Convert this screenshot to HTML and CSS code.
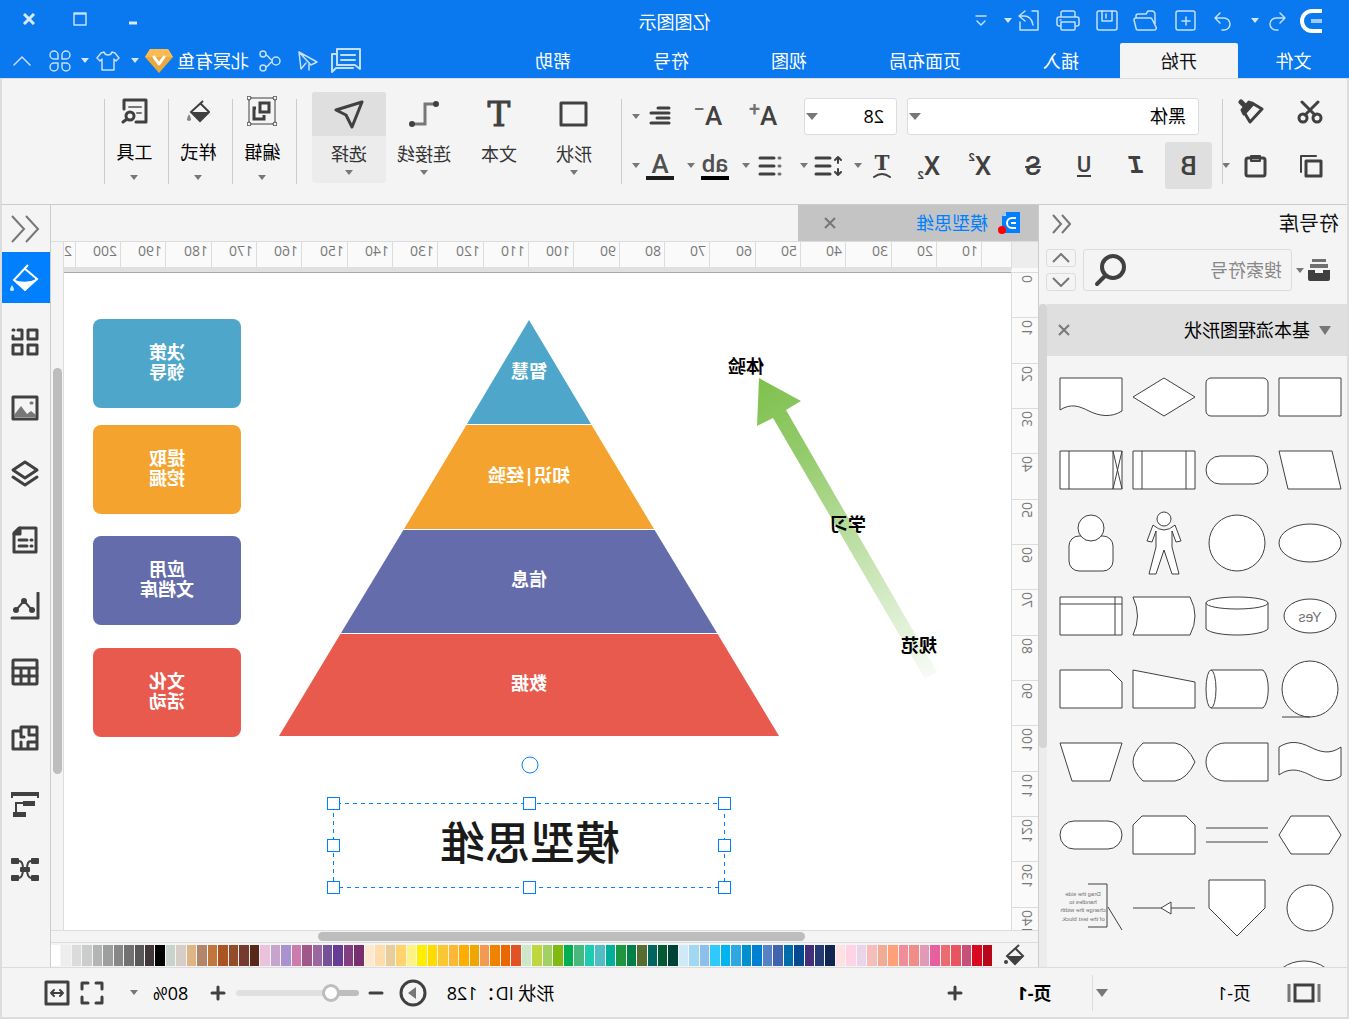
FILE: index.html
```html
<!DOCTYPE html>
<html lang="zh-CN">
<head>
<meta charset="utf-8">
<title>亿图图示</title>
<link rel="stylesheet" href="styles.css">
</head>
<body>
<div class="app">
  <header class="header">
    <div class="titlebar">
      <div class="quick">
        <svg class="logo" width="24" height="26" viewBox="0 0 24 26"><path d="M1 3h10a10 10 0 0 1 0 20H1" fill="none" stroke="#fff" stroke-width="4"/><path d="M1 13h11" stroke="#9ccbff" stroke-width="4"/></svg>
        <button class="hbtn" aria-label="撤销"><svg class="ln" width="18" height="20" viewBox="0 0 18 20"><path d="M6 2 1 7l5 5M1 7h9a6 6 0 0 1 0 12H8"/></svg></button>
        <button class="hbtn" aria-label="撤销列表"><svg class="caret" width="8" height="5" viewBox="0 0 8 5"><path d="M0 0h8L4 5z"/></svg></button>
        <button class="hbtn" aria-label="恢复"><svg class="ln" width="18" height="20" viewBox="0 0 18 20"><path d="m12 2 5 5-5 5M17 7H8a6 6 0 0 0 0 12h2"/></svg></button>
        <button class="hbtn" aria-label="新建"><svg class="ln" width="22" height="22" viewBox="0 0 22 22"><rect x="2" y="1" width="19" height="19" rx="2"/><path d="M11 7v8M7 11h8"/></svg></button>
        <button class="hbtn" aria-label="打开"><svg class="ln" width="24" height="22" viewBox="0 0 24 22"><path d="M2 14V4a3 3 0 0 1 3-3h4l2 3h8a2 2 0 0 1 2 2v2M3 20h16a2 2 0 0 0 2-2l2-8a2 2 0 0 0-2-2H7a2 2 0 0 0-2 1L1 17a2 2 0 0 0 2 3z"/></svg></button>
        <button class="hbtn" aria-label="保存"><svg class="ln" width="22" height="22" viewBox="0 0 22 22"><rect x="1" y="1" width="20" height="19" rx="2"/><path d="M6 1v10h10V1M12 4v4"/></svg></button>
        <button class="hbtn" aria-label="打印"><svg class="ln" width="24" height="22" viewBox="0 0 24 22"><path d="M5 7V3a2 2 0 0 1 2-2h10a2 2 0 0 1 2 2v4M5 16H3a2 2 0 0 1-2-2V9a2 2 0 0 1 2-2h18a2 2 0 0 1 2 2v5a2 2 0 0 1-2 2h-2M5 12h14v7a1 1 0 0 1-1 1H6a1 1 0 0 1-1-1zM19 10h1"/></svg></button>
        <button class="hbtn" aria-label="导出"><svg class="ln" width="22" height="22" viewBox="0 0 22 22"><path d="M8 1H2v19h18v-8M15 1l6 5-6 5M21 6h-5c-5 0-8 3-9 9"/></svg></button>
        <button class="hbtn" aria-label="导出列表"><svg class="caret" width="8" height="5" viewBox="0 0 8 5"><path d="M0 0h8L4 5z"/></svg></button>
        <button class="hbtn" aria-label="更多"><svg class="ln" width="12" height="12" viewBox="0 0 12 12"><path d="M1 1h10M2 6l4 4 4-4"/></svg></button>
      </div>
      <h1 class="app-title">亿图图示</h1>
      <div class="window-controls">
        <button class="hbtn" aria-label="最小化"><svg class="wc" width="10" height="12" viewBox="0 0 10 12"><path d="M1 10h8"/></svg></button>
        <button class="hbtn" aria-label="最大化"><svg class="ln" width="14" height="14" viewBox="0 0 14 14"><path d="M1 1h12v12H1zM1 2h12"/></svg></button>
        <button class="hbtn" aria-label="关闭"><svg class="wc" width="12" height="12" viewBox="0 0 12 12"><path d="m1 1 10 10M11 1 1 11"/></svg></button>
      </div>
    </div>
    <div class="menubar">
      <nav class="tabs">
        <a class="tab tab-file" href="#file">文件</a>
        <a class="tab tab-active" href="#home">开始</a>
        <a class="tab" href="#insert">插入</a>
        <a class="tab" href="#layout">页面布局</a>
        <a class="tab" href="#view">视图</a>
        <a class="tab" href="#symbol">符号</a>
        <a class="tab" href="#help">帮助</a>
      </nav>
      <div class="account">
        <button class="hbtn" aria-label="消息"><svg class="ln2" width="32" height="26" viewBox="0 0 32 26"><path d="M2 1h23v16H7l-5 4zM7 7h14M7 12h14M25 6h5v18l-4-4H9"/></svg></button>
        <button class="hbtn" aria-label="发送"><svg class="ln" width="20" height="22" viewBox="0 0 20 22"><path d="M19 2 1 12l6 3zM19 2l-2 17-5-6M19 2 8 14M9 14v6"/></svg></button>
        <button class="hbtn" aria-label="分享"><svg class="ln" width="22" height="22" viewBox="0 0 22 22"><circle cx="5" cy="11" r="4"/><circle cx="18" cy="4" r="3"/><circle cx="18" cy="18" r="3"/><path d="M9 10c3-1 3-4 6-5M9 12c3 1 3 4 6 5"/></svg></button>
        <span class="user">北冥有鱼</span>
        <svg width="28" height="26" viewBox="0 0 28 26"><path d="M5 1h18l5 8-14 16L0 9z" fill="#eaa83e"/><path d="M5 1h18l5 8H0z" fill="#fabb52"/><path d="m9 9 5 7 5-7" fill="none" stroke="#fff" stroke-width="3" stroke-linecap="round" stroke-linejoin="round"/></svg>
        <svg class="caret" width="8" height="5" viewBox="0 0 8 5"><path d="M0 0h8L4 5z"/></svg>
        <button class="hbtn" aria-label="主题"><svg class="ln" width="24" height="22" viewBox="0 0 24 22"><path d="M8 2 5 3 1 8l3 3 2-2v11h12V9l2 2 3-3-4-5-3-1c-1 4-7 4-8 0z"/></svg></button>
        <svg class="caret" width="8" height="5" viewBox="0 0 8 5"><path d="M0 0h8L4 5z"/></svg>
        <button class="hbtn" aria-label="应用"><svg class="ln" width="22" height="22" viewBox="0 0 22 22"><path d="M9 9H5a4 4 0 1 1 4-4zM13 9V5a4 4 0 1 1 4 4zM9 13v4a4 4 0 1 1-4-4zM13 13h4a4 4 0 1 1-4 4z"/></svg></button>
        <button class="hbtn" aria-label="收起"><svg class="ln" width="18" height="12" viewBox="0 0 18 12"><path d="m1 10 8-8 8 8"/></svg></button>
      </div>
    </div>
  </header>

  <div class="frame">
    <section class="ribbon">
      <div class="clip">
        <div class="clip-top">
          <button class="rbtn" aria-label="剪切"><svg class="ic" width="26" height="24" viewBox="0 0 26 24"><circle cx="6" cy="18" r="4"/><circle cx="20" cy="18" r="4"/><path d="M8 15 21 2M18 15 5 2"/></svg></button>
          <button class="rbtn" aria-label="格式刷"><svg class="ic" width="26" height="26" viewBox="0 0 26 26"><path d="m2 10 10-6 8 9-6 10z"/><path d="m11 5 4-2 7 8-2 4z" fill="#404040"/><path d="m19 7 4-4" stroke-width="5"/></svg></button>
        </div>
        <div class="clip-bottom">
          <button class="rbtn" aria-label="复制"><svg class="ic" width="24" height="24" viewBox="0 0 24 24"><path d="M2 7h15v15H2z"/><path d="M7 2h15v16" stroke-width="2"/></svg></button>
          <button class="rbtn" aria-label="粘贴"><svg class="ic" width="24" height="24" viewBox="0 0 24 24"><rect x="2" y="4" width="19" height="18" rx="2"/><path d="M7 2h9v5H7z" stroke-width="2"/></svg></button>
          <svg class="dn" width="8" height="5" viewBox="0 0 8 5"><path d="M0 0h8L4 5z"/></svg>
        </div>
      </div>
      <div class="vline"></div>
      <div class="fontgroup">
        <div class="font-top">
          <label class="combo"><select aria-label="字体"><option>黑体</option></select><svg class="dn combo-caret" width="12" height="7" viewBox="0 0 12 7"><path d="M0 0h12L6 7z"/></svg></label>
          <label class="combo"><select aria-label="字号"><option>28</option></select><svg class="dn combo-caret" width="12" height="7" viewBox="0 0 12 7"><path d="M0 0h12L6 7z"/></svg></label>
          <button class="rbtn letter" aria-label="增大字号">A<sup class="mark">+</sup></button>
          <button class="rbtn letter" aria-label="减小字号">A<sup class="mark">−</sup></button>
          <button class="split" aria-label="对齐"><svg class="ic" width="28" height="24" viewBox="0 0 28 24"><path d="M5 4h11M5 9h18M5 14h12M5 19h18"/></svg><svg class="dn" width="8" height="5" viewBox="0 0 8 5"><path d="M0 0h8L4 5z"/></svg></button>
        </div>
        <div class="font-bottom">
          <button class="rbtn letter pressed" aria-label="加粗">B</button>
          <button class="rbtn letter ital" aria-label="斜体">I</button>
          <button class="rbtn letter" aria-label="下划线"><span class="under">U</span></button>
          <button class="rbtn letter" aria-label="删除线"><span class="strike">S</span></button>
          <button class="rbtn letter" aria-label="上标">X<sup class="tiny">2</sup></button>
          <button class="rbtn letter" aria-label="下标">X<sub class="tiny">2</sub></button>
          <button class="split" aria-label="文字方向"><span class="arcbox">T<svg class="ic" width="20" height="6" viewBox="0 0 20 6"><path d="M2 5q8-6 16 0" stroke-width="2"/></svg></span><svg class="dn" width="8" height="5" viewBox="0 0 8 5"><path d="M0 0h8L4 5z"/></svg></button>
          <button class="split" aria-label="行距"><svg class="ic" width="28" height="24" viewBox="0 0 28 24"><path d="M12 4h14M12 12h14M12 20h14"/><path d="M4 9V3M1 6l3-3 3 3M4 15v6M1 18l3 3 3-3" stroke-width="2"/></svg><svg class="dn" width="8" height="5" viewBox="0 0 8 5"><path d="M0 0h8L4 5z"/></svg></button>
          <button class="split" aria-label="项目符号"><svg class="ic" width="28" height="24" viewBox="0 0 28 24"><path d="M10 4h14M10 12h14M10 20h14"/><path d="M4 4h1M4 12h1M4 20h1" stroke="#707070"/></svg><svg class="dn" width="8" height="5" viewBox="0 0 8 5"><path d="M0 0h8L4 5z"/></svg></button>
          <button class="split" aria-label="突出显示"><span class="inkbox">ab</span><svg class="dn" width="8" height="5" viewBox="0 0 8 5"><path d="M0 0h8L4 5z"/></svg></button>
          <button class="split" aria-label="字体颜色"><span class="inkbox inkbox-a">A</span><svg class="dn" width="8" height="5" viewBox="0 0 8 5"><path d="M0 0h8L4 5z"/></svg></button>
        </div>
      </div>
      <div class="vline"></div>
      <div class="tools">
        <button class="tool"><span class="tool-icon"><svg class="ic" width="30" height="26" viewBox="0 0 30 26"><path d="M3 2h25v22H3z"/></svg></span>形状<svg class="dn" width="8" height="5" viewBox="0 0 8 5"><path d="M0 0h8L4 5z"/></svg></button>
        <button class="tool"><span class="tool-icon slab">T</span>文本</button>
        <button class="tool"><span class="tool-icon"><svg width="32" height="28" viewBox="0 0 32 28"><path d="M4 4h11v20h11" fill="none" stroke="#777" stroke-width="3"/><circle cx="4" cy="4" r="3" fill="#404040"/><circle cx="28" cy="24" r="3" fill="#404040"/></svg></span>连接线<svg class="dn" width="8" height="5" viewBox="0 0 8 5"><path d="M0 0h8L4 5z"/></svg></button>
        <button class="tool tool-on"><span class="tool-icon"><svg class="ic" width="30" height="30" viewBox="0 0 30 30"><path d="m2 3 26 8-10 5-6 12z"/></svg></span>选择<svg class="dn" width="8" height="5" viewBox="0 0 8 5"><path d="M0 0h8L4 5z"/></svg></button>
      </div>
      <div class="vline"></div>
      <button class="group"><span class="group-icon"><svg width="30" height="30" viewBox="0 0 30 30" fill="none" stroke="#404040"><path d="M2 2h26v26H2z" stroke-width="1"/><path d="M8 7h9v9H8zM21 12h2v11H13v-4" stroke-width="3"/><g fill="#f4f4f4" stroke-width="1"><circle cx="2" cy="2" r="2"/><circle cx="28" cy="2" r="2"/><circle cx="2" cy="28" r="2"/><circle cx="28" cy="28" r="2"/></g></svg></span>编辑<svg class="dn" width="8" height="5" viewBox="0 0 8 5"><path d="M0 0h8L4 5z"/></svg></button>
      <div class="vline"></div>
      <button class="group"><span class="group-icon"><svg width="24" height="26" viewBox="0 0 24 26"><path d="m7 3 12 11-9 9-9-9 8-8" fill="none" stroke="#404040" stroke-width="2"/><path d="M1 14h18l-9 9z" fill="#404040"/><path d="M21 16q-4 7 0 7t0-7z" fill="#888"/></svg></span>样式<svg class="dn" width="8" height="5" viewBox="0 0 8 5"><path d="M0 0h8L4 5z"/></svg></button>
      <div class="vline"></div>
      <button class="group"><span class="group-icon"><svg class="ic" width="28" height="28" viewBox="0 0 28 28"><path d="M12 25H2V3h22v9"/><circle cx="18" cy="19" r="4"/><path d="m21 22 4 3"/><path d="M7 10h12M7 16h4" stroke="#777" stroke-width="2"/></svg></span>工具<svg class="dn" width="8" height="5" viewBox="0 0 8 5"><path d="M0 0h8L4 5z"/></svg></button>
      <div class="vline"></div>
    </section>

    <main class="workspace">
      <aside class="library">
        <div class="lib-head"><h2>符号库</h2><button class="rbtn" aria-label="折叠"><svg class="thin" width="20" height="20" viewBox="0 0 20 20"><path d="M9 1 1 10l8 9M18 1l-8 9 8 9"/></svg></button></div>
        <div class="lib-search">
          <svg width="22" height="22" viewBox="0 0 22 22"><path d="M4 0h14v3H4zM2 5h18v4H2z" fill="#707070"/><path d="M0 11h7v3h8v-3h7v9a2 2 0 0 1-2 2H2a2 2 0 0 1-2-2z" fill="#404040"/></svg>
          <svg class="dn" width="8" height="5" viewBox="0 0 8 5"><path d="M0 0h8L4 5z"/></svg>
          <label class="search"><input type="text" placeholder="搜索符号" aria-label="搜索符号"><svg width="32" height="34" viewBox="0 0 32 34" fill="none" stroke="#404040" stroke-linecap="round"><circle cx="13" cy="14" r="11" stroke-width="4"/><path d="m21 23 8 8" stroke-width="4"/></svg></label>
          <div class="steps">
            <button aria-label="上一个"><svg class="thin" width="18" height="10" viewBox="0 0 18 10"><path d="m1 9 8-8 8 8"/></svg></button>
            <button aria-label="下一个"><svg class="thin" width="18" height="10" viewBox="0 0 18 10"><path d="m1 1 8 8 8-8"/></svg></button>
          </div>
        </div>
        <div class="lib-body">
          <div class="lib-main">
            <div class="category"><svg class="dn" width="12" height="9" viewBox="0 0 12 9"><path d="M0 0h12L6 9z"/></svg><h3>基本流程图形状</h3><button class="rbtn" aria-label="关闭分类"><svg class="thin" width="12" height="12" viewBox="0 0 12 12"><path d="m1 1 10 10M11 1 1 11"/></svg></button></div>
            <div class="shapes">
              <svg viewBox="-36 -36 73 73"><path d="M-31-19h62v38h-62z"/></svg>
              <svg viewBox="-36 -36 73 73"><rect x="-31" y="-19" width="62" height="38" rx="5"/></svg>
              <svg viewBox="-36 -36 73 73"><path d="M0-19 31 0 0 19-31 0z"/></svg>
              <svg viewBox="-36 -36 73 73"><path d="M-31-19h62v32C20 6 12 9 2 14S-20 21-31 14z"/></svg>
              <svg viewBox="-36 -36 73 73"><path d="M31-19h-53l-9 38h53z"/></svg>
              <svg viewBox="-36 -36 73 73"><rect x="-31" y="-14" width="62" height="28" rx="14"/></svg>
              <svg viewBox="-36 -36 73 73"><path d="M-31-19h62v38h-62zM-22-19v38M22-19v38"/></svg>
              <svg viewBox="-36 -36 73 73"><path d="M-31-19h62v38h-62zM-22-19v38M22-19v38M-31-19l9 38M-22-19l-9 38"/></svg>
              <svg viewBox="-36 -36 73 73"><ellipse rx="31" ry="19"/></svg>
              <svg viewBox="-36 -36 73 73"><circle r="28"/></svg>
              <svg viewBox="-36 -36 73 73"><circle cy="-24" r="7"/><path d="M-11-18Q0-8 11-18L17-2l-5 1-4-11V4l7 27H8L0 7l-8 24h-7L-8 4v-16l-4 11-5-1z"/></svg>
              <svg viewBox="-36 -36 73 73"><rect x="-22" y="-7" width="44" height="35" rx="10"/><circle cy="-15" r="13"/></svg>
              <svg viewBox="-36 -36 73 73"><ellipse rx="26" ry="17"/><text y="6" class="yes">Yes</text></svg>
              <svg viewBox="-36 -36 73 73"><path d="M-31-13v26c8 8 54 8 62 0v-26"/><ellipse cy="-13" rx="31" ry="6"/></svg>
              <svg viewBox="-36 -36 73 73"><path d="M31-19h-57q-10 19 0 38h57q-9-19 0-38z"/></svg>
              <svg viewBox="-36 -36 73 73"><path d="M-31-19h62v38h-62zM-31-12h62M-24-19v38"/></svg>
              <svg viewBox="-36 -36 73 73"><circle r="28"/><path d="M0 28h28"/></svg>
              <svg viewBox="-36 -36 73 73"><path d="M26-19h-52c-7 6-7 32 0 38h52"/><ellipse cx="26" rx="5" ry="19"/></svg>
              <svg viewBox="-36 -36 73 73"><path d="M-31-7 31-19v38h-62z"/></svg>
              <svg viewBox="-36 -36 73 73"><path d="M-31-7-19-19h50v38h-62z"/></svg>
              <svg viewBox="-36 -36 73 73"><path d="M-31-15c11 8 21 5 31 0s20-7 31 0v28c-11-8-21-5-31 0s-20 9-31 1z"/></svg>
              <svg viewBox="-36 -36 73 73"><path d="M-31-19h43a19 19 0 0 1 0 38h-43z"/></svg>
              <svg viewBox="-36 -36 73 73"><path d="M21-19q20 19 0 38h-32Q-23 17-31 0q8-17 20-19z"/></svg>
              <svg viewBox="-36 -36 73 73"><path d="M-31-19h62L19 19h-38z"/></svg>
              <svg viewBox="-36 -36 73 73"><path d="M-31 0-19-19h38L31 0 19 19h-38z"/></svg>
              <svg viewBox="-36 -36 73 73"><path d="M-31-7h62M-31 7h62"/></svg>
              <svg viewBox="-36 -36 73 73"><path d="M-31-10l9-9h44l9 9v29h-62z"/></svg>
              <svg viewBox="-36 -36 73 73"><rect x="-31" y="-14" width="62" height="28" rx="14"/></svg>
              <svg viewBox="-36 -36 73 73"><circle r="23"/></svg>
              <svg viewBox="-36 -36 73 73"><path d="M-28-28h56V0L0 28-28 0z"/></svg>
              <svg viewBox="-36 -36 73 73"><path d="M-31 0h24M3 0h28M-7-6 3 0-7 6z"/></svg>
              <svg viewBox="-36 -36 73 73"><path d="M3-24h-19v43H3M-17-1l-14 23" fill="none"/><g class="note"><text x="8" y="-12">Drag the side</text><text x="8" y="-4">handles to</text><text x="8" y="4">change the width</text><text x="8" y="13">of the text block.</text></g></svg>
              <svg viewBox="-36 -36 73 73"><ellipse cx="6" cy="3" rx="30" ry="23"/></svg>
            </div>
          </div>
          <div class="lib-scroll"><div class="lib-thumb"></div></div>
        </div>
      </aside>

      <section class="editor">
        <div class="doctabs">
          <div class="doctab">
            <svg width="22" height="22" viewBox="0 0 22 22"><path d="M0 0h14l4 4v17H0z" fill="#0080ff"/><path d="M14 0v4h4z" fill="#a8d2ff"/><path d="M4 6h4a5 5 0 0 1 0 10H4M4 11h5" fill="none" stroke="#fff" stroke-width="2"/><circle cx="18" cy="18" r="4" fill="#f00"/></svg>
            <a href="#doc">模型思维</a>
            <button class="rbtn" aria-label="关闭文档"><svg class="thin" width="12" height="12" viewBox="0 0 12 12"><path d="m1 1 10 10M11 1 1 11"/></svg></button>
          </div>
        </div>
        <div class="sheet">
          <div class="corner"></div>
          <ol class="hruler" id="hruler"></ol>
          <ol class="vruler" id="vruler"></ol>
          <div class="canvas">
            <svg class="drawing" width="947" height="658" viewBox="0 0 947 658">
              <defs><linearGradient id="fade" gradientUnits="userSpaceOnUse" x1="253" y1="106" x2="80" y2="404"><stop offset="0" stop-color="#7fc04e"/><stop offset=".25" stop-color="#93cb6b"/><stop offset=".55" stop-color="#bcdfa3"/><stop offset="1" stop-color="#f7fbf5"/></linearGradient></defs>
              <path d="m252 106-42 23 15 9L74 400l12 7 152-261 16 8z" fill="url(#fade)"/>
              <path d="m482 48 62 104H420z" fill="#4ea6ca"/>
              <path d="M420 152h124l63 105H357z" fill="#f4a42e"/>
              <path d="M357 257h250l63 104H294z" fill="#646cac"/>
              <path d="M294 361h376l62 103H232z" fill="#e75a4d"/>
              <path d="M400 152.500h160M340 257.500h284M280 361.500h404" stroke="#fff"/>
              <g class="slice"><text x="482" y="106">智慧</text><text x="482" y="210">知识|经验</text><text x="482" y="314">信息</text><text x="482" y="418">数据</text></g>
              <g class="stage"><text x="265" y="101">体验</text><text x="163" y="259">学习</text><text x="92" y="380">规范</text></g>
              <text class="doc-title" x="481" y="588">模型思维</text>
              <g class="selection" fill="#fff" stroke="#0080ff" shape-rendering="crispEdges"><path d="M286.500 531.500h391v84h-391z" fill="none" stroke-dasharray="4 4"/><path d="M280.500 525.500h12v12h-12zM475.500 525.500h12v12h-12zM671.500 525.500h12v12h-12zM280.500 567.500h12v12h-12zM671.500 567.500h12v12h-12zM280.500 609.500h12v12h-12zM475.500 609.500h12v12h-12zM671.500 609.500h12v12h-12z"/></g>
              <circle cx="481" cy="493" r="8" fill="#fff" stroke="#0080ff"/>
            </svg>
            <div class="card card-blue">决策<br>领导</div>
            <div class="card card-orange">提取<br>挖掘</div>
            <div class="card card-purple">应用<br>文档库</div>
            <div class="card card-red">文化<br>活动</div>
          </div>
          <div class="vscroll"><div class="vthumb"></div></div>
          <div class="hscroll"><div class="hthumb"></div></div>
        </div>
        <div class="palette">
          <svg width="24" height="24" viewBox="0 0 24 24"><path d="m8 2 12 11-8 8-8-8 7-7" fill="none" stroke="#404040" stroke-width="2"/><path d="M4 13h16l-8 8z" fill="#404040"/><circle cx="21" cy="19" r="2" fill="#404040"/></svg>
          <div class="swatches" id="swatches"></div>
        </div>
      </section>

      <nav class="rail">
        <button class="rail-btn rail-fold" aria-label="折叠"><svg class="thin" width="30" height="28" viewBox="0 0 30 28"><path d="M14 1 2 14l12 13M28 1 16 14l12 13"/></svg></button>
        <button class="rail-btn rail-on" aria-label="填充"><svg width="30" height="30" viewBox="0 0 30 30"><path d="m12 2 14 15-11 10L3 16 16 5" fill="none" stroke="#fff" stroke-width="2"/><path d="M3 16q11 5 23 1L15 28z" fill="#fff"/><path d="M28 22q-4 6 0 6t0-6z" fill="#cde5ff"/></svg></button>
        <button class="rail-btn" aria-label="布局"><svg class="ic" width="28" height="28" viewBox="0 0 28 28"><path d="M2 2h9v9H2zM2 17h9v9H2zM17 17h9v9h-9zM26 8v3h-9V2h4M25 2h1"/></svg></button>
        <button class="rail-btn" aria-label="图片"><svg class="ic" width="28" height="26" viewBox="0 0 28 26"><path d="M2 2h24v22H2z"/><path d="m3 20 5-4 4 3 6-8 7 9v2H3z" fill="#777" stroke="none"/><path d="M7 8h1" stroke="#777"/></svg></button>
        <button class="rail-btn" aria-label="图层"><svg class="ic" width="30" height="28" viewBox="0 0 30 28"><path d="m15 2 12 8-12 8L3 10zM3 17l12 8 12-8"/></svg></button>
        <button class="rail-btn" aria-label="页面"><svg class="ic" width="26" height="28" viewBox="0 0 26 28"><path d="M2 2h17l5 5v19H2z"/><path d="M18 2v6h6" fill="#404040"/><path d="M6 14h1M11 14h8M6 20h1M11 20h8"/></svg></button>
        <button class="rail-btn" aria-label="图表"><svg class="ic" width="30" height="28" viewBox="0 0 30 28"><path d="M2 1v25h26"/><path d="m8 18 8-9 8 9" stroke-width="2"/><g fill="#404040" stroke="none"><circle cx="8" cy="18" r="3"/><circle cx="16" cy="9" r="3"/><circle cx="24" cy="18" r="3"/></g></svg></button>
        <button class="rail-btn" aria-label="表格"><svg class="ic" width="28" height="28" viewBox="0 0 28 28"><rect x="2" y="2" width="24" height="24" rx="1"/><path d="M2 10h24M2 18h24M10 10v15M18 10v15"/></svg></button>
        <button class="rail-btn" aria-label="平面图"><svg class="ic" width="28" height="26" viewBox="0 0 28 26"><path d="M2 2h16v4h8v18H2zM10 2v8H2M18 6v6h-3M2 17h9v7M18 17v7"/></svg></button>
        <button class="rail-btn" aria-label="流程"><svg width="28" height="26" viewBox="0 0 28 26"><path d="M0 1h28v6h-2V5H2v2H0zM4 10h12v5H4zM13 21h13v5H13z" fill="#404040"/><path d="M15 12h8v10" fill="none" stroke="#404040" stroke-width="2"/></svg></button>
        <button class="rail-btn" aria-label="导图"><svg width="28" height="26" viewBox="0 0 28 26" fill="#404040"><rect y="1" width="8" height="6" rx="1"/><rect x="20" y="1" width="8" height="6" rx="1"/><rect y="18" width="8" height="6" rx="1"/><rect x="20" y="18" width="8" height="6" rx="1"/><rect x="9" y="10" width="10" height="5" rx="1"/><path d="M8 4q4 0 4 8t-4 9M20 4q-4 0-4 8t4 9" fill="none" stroke="#404040" stroke-width="2"/></svg></button>
      </nav>
    </main>

    <footer class="status">
      <div class="pages">
        <button class="rbtn" aria-label="页面视图"><svg width="34" height="20" viewBox="0 0 34 20" fill="none" stroke="#404040"><path d="M8 2h18v16H8z" stroke-width="3"/><path d="M2 1v18M32 1v18" stroke="#777" stroke-width="3"/></svg></button>
        <span>页-1</span>
        <button class="rbtn" aria-label="页面列表"><svg class="dn" width="12" height="8" viewBox="0 0 12 8"><path d="M0 0h12L6 8z"/></svg></button>
        <b class="page-now">页-1</b>
        <button class="rbtn" aria-label="添加页面"><svg class="ic" width="18" height="18" viewBox="0 0 18 18"><path d="M9 3v12M3 9h12"/></svg></button>
      </div>
      <div class="zoom">
        <span>形状 ID：128</span>
        <button class="rbtn" aria-label="播放"><svg class="ic" width="28" height="28" viewBox="0 0 28 28"><circle cx="14" cy="14" r="12"/><path d="m11 8 8 6-8 6z" fill="#777" stroke="none"/></svg></button>
        <button class="rbtn" aria-label="缩小"><svg class="ic" width="18" height="18" viewBox="0 0 18 18"><path d="M3 9h12"/></svg></button>
        <input class="slider" type="range" min="0" max="100" value="18" aria-label="缩放">
        <button class="rbtn" aria-label="放大"><svg class="ic" width="18" height="18" viewBox="0 0 18 18"><path d="M9 3v12M3 9h12"/></svg></button>
        <span>80%</span>
        <svg class="dn" width="8" height="5" viewBox="0 0 8 5"><path d="M0 0h8L4 5z"/></svg>
        <button class="rbtn" aria-label="全屏"><svg class="ic" width="26" height="26" viewBox="0 0 26 26"><path d="M3 9V3h6M17 3h6v6M23 17v6h-6M9 23H3v-6"/></svg></button>
        <button class="rbtn" aria-label="适合宽度"><svg class="ic" width="26" height="26" viewBox="0 0 26 26"><path d="M2 2h22v22H2z"/><path d="M7 13h12M10 10l-3 3 3 3M16 10l3 3-3 3" stroke-width="2"/></svg></button>
      </div>
    </footer>
  </div>
</div>
<script src="app.js"></script>
</body>
</html>
```
FILE: styles.css
```css
* { box-sizing: border-box; }
body { margin: 0; font: 18px/24px "Open Sans", "Noto Sans CJK SC", sans-serif; color: #111; overflow: hidden; }
h1, h2, h3, ol { margin: 0; padding: 0; font-size: 18px; font-weight: 400; list-style: none; }
button { padding: 0; border: 0; background: none; font: inherit; color: inherit; display: flex; align-items: center; justify-content: center; }
a { color: inherit; text-decoration: none; }
svg { display: block; flex: none; }

/* The whole window is shown as in a mirror. */
.app { height: 100vh; display: flex; flex-direction: column; transform: scaleX(-1); background: #f4f4f4; }

.ln, .ln2, .wc { fill: none; stroke: #c4dffd; stroke-width: 2; stroke-linecap: round; stroke-linejoin: round; }
.ln { stroke-width: 1.500; }
.wc { stroke: #d9eafe; stroke-width: 3; stroke-linecap: butt; }
.ic { fill: none; stroke: #404040; stroke-width: 3; stroke-linecap: round; stroke-linejoin: round; }
.thin { fill: none; stroke: #777; stroke-width: 2; }
.dn { fill: #777; }
.caret { fill: #d3e7fe; }

.header { background: #0a78ee; color: #fff; }
.titlebar { display: grid; grid-template-columns: 1fr auto 1fr; height: 43px; }
.quick { display: grid; grid-template-columns: 40px 28px 16px 48px 26px 55px 22px 56px 22px 20px 34px; padding: 0 0 2px 18px; place-items: center; }
.app-title { align-self: center; }
.window-controls { display: grid; grid-template-columns: 54px 52px 50px; justify-content: end; justify-items: center; align-items: center; padding: 0 4px 6px 0; }
.menubar { display: flex; justify-content: space-between; height: 35px; }
.tabs { display: flex; }
.tab { display: flex; align-items: center; justify-content: center; padding: 0 41px; }
.tab-file { width: 111px; padding: 0; }
.tab-active { background: #f4f4f4; color: #111; border-radius: 2px 2px 0 0; }
.account { display: grid; grid-template-columns: 38px 38px 38px 76px 32px 16px 38px 8px 42px 34px; place-items: center; padding-right: 5px; }

.frame { flex: 1; min-height: 0; display: flex; flex-direction: column; border: solid #dcdcdc; border-width: 1px 2px 2px; }
.ribbon { display: flex; align-items: flex-start; height: 126px; padding: 13px 0 0 6px; border-bottom: 1px solid #ccc; }
.vline { width: 1px; height: 85px; margin-top: 7px; background: #ccc; }
.clip { width: 118px; }
.clip-top { display: grid; grid-template-columns: 62px 56px; height: 40px; place-items: center; }
.clip-bottom { display: grid; grid-template-columns: 60px 52px 6px; height: 47px; margin-top: 10px; place-items: center; }
.fontgroup { padding: 0 10px; }
.font-top { display: grid; grid-template-columns: 292px 93px 62px 28px 52px; column-gap: 10px; height: 48px; align-items: center; padding-left: 13px; }
.font-bottom { display: grid; grid-template-columns: 47px 58px 46px 56px 50px 52px 49px 54px 58px 55px 55px; height: 47px; margin-top: 2px; align-items: center; }
.combo { display: flex; position: relative; height: 37px; }
.combo select { width: 100%; appearance: none; border: 1px solid #dcdcdc; border-radius: 3px; background: #fff; padding: 0 12px; font: inherit; color: #000; }
.combo-caret { position: absolute; right: 2px; top: 15px; }
.split { gap: 6px; justify-content: flex-end; }
.letter { font: 500 26px/30px Roboto, sans-serif; color: #404040; }
.mark { align-self: flex-start; font-size: 20px; line-height: 16px; color: #707070; }
.pressed { height: 47px; background: #dfdfdf; border-radius: 3px; }
.ital { font: italic 700 26px/30px "Liberation Mono", monospace; }
.under { font-size: 22px; line-height: 20px; border-bottom: 2px solid #404040; }
.strike { text-decoration: line-through; text-decoration-thickness: 2px; }
.tiny { font: 700 11px/12px "Liberation Sans", sans-serif; }
sup.tiny { align-self: flex-start; }
sub.tiny { align-self: flex-end; }
.arcbox { width: 28px; display: flex; flex-direction: column; align-items: center; font: 700 20px/18px "DejaVu Serif", serif; color: #404040; }
.inkbox { width: 28px; font: 500 24px/24px Roboto, sans-serif; color: #505050; border-bottom: 4px solid #000; }
.inkbox-a { font-size: 26px; border-color: #1c1c1c; }
.tools { display: flex; gap: 1px; padding: 0 15px 0 10px; }
.tool { width: 74px; height: 91px; flex-direction: column; justify-content: flex-start; border-radius: 3px; overflow: hidden; gap: 4px; color: #333; }
.tool-icon { width: 100%; height: 44px; margin-bottom: 2px; display: flex; align-items: center; justify-content: center; }
.slab { font: 400 34px/44px "DejaVu Serif", serif; color: #404040; -webkit-text-stroke: 1px #404040; }
.tool-on { background: #ececec; }
.tool-on .tool-icon { background: #dfdfdf; }
.group { width: 63px; flex-direction: column; gap: 11px; padding-left: 4px; color: #000; }
.group-icon { height: 37px; display: flex; align-items: center; }

.workspace { flex: 1; min-height: 0; display: flex; }
.library { width: 309px; display: flex; flex-direction: column; border-right: 1px solid #ccc; }
.lib-head { display: flex; justify-content: space-between; align-items: center; height: 38px; padding: 0 12px 0 8px; }
.lib-head h2 { font-size: 20px; }
.lib-search { display: flex; align-items: center; height: 54px; padding-left: 17px; gap: 4px; }
.search { width: 209px; height: 42px; display: flex; align-items: center; border: 1px solid #dcdcdc; border-radius: 3px; padding: 0 10px 0 9px; }
.search input { flex: 1; min-width: 0; padding: 0; border: 0; background: none; font: inherit; outline: 0; }
.search input::placeholder { color: #888; opacity: 1; }
.steps { display: flex; flex-direction: column; gap: 6px; margin-left: 3px; }
.steps button { width: 30px; height: 18px; border: 1px solid #dcdcdc; border-radius: 3px; }
.lib-body { flex: 1; min-height: 0; display: flex; padding-top: 7px; }
.lib-main { flex: 1; overflow: hidden; }
.category { display: flex; align-items: center; height: 52px; background: #dfdfdf; padding: 0 11px 0 16px; }
.category h3 { flex: 1; padding-left: 9px; color: #000; }
.shapes { display: grid; grid-template-columns: repeat(4, 73px); grid-auto-rows: 73px; padding: 5px 0 0 1px; fill: #fff; stroke: #404040; }
.shapes text { stroke: none; fill: #707070; text-anchor: middle; font-family: "Liberation Sans", sans-serif; }
.yes { font-size: 14px; }
.note text { font-size: 6px; }
.lib-scroll { width: 8px; background: #ececec; }
.lib-thumb { height: 67%; background: #d5d5d5; border-radius: 4px; }

.editor { flex: 1; min-width: 0; display: flex; flex-direction: column; }
.doctabs { height: 37px; border-bottom: 1px solid #dcdcdc; }
.doctab { display: flex; align-items: center; width: 240px; height: 36px; padding: 0 26px 0 18px; gap: 10px; background: #c4c4c4; }
.doctab a { flex: 1; color: #0080ff; }
.sheet { flex: 1; min-height: 0; display: grid; grid-template: 30px 1fr 13px / 27px 1fr 13px; }
.corner { background: #ededed; border-right: 1px solid #dcdcdc; border-bottom: 4px solid #fafafa; }
.hruler { display: flex; overflow: hidden; padding-left: 29px; background: #fafafa; border-bottom: 5px solid #e0e0e0; box-shadow: 0 1px #aaa; z-index: 1; }
.hruler li { flex: none; width: 45px; padding-left: 3px; border-left: 1px solid #dcdcdc; font-size: 14px; line-height: 18px; color: #777; }
.hruler li:nth-child(3n) { width: 46px; }
.vruler { overflow: hidden; background: #fafafa; border-right: 1px solid #dcdcdc; }
.vruler li { height: 45px; padding: 2px 0 0 2px; border-top: 1px solid #dcdcdc; font-size: 14px; line-height: 18px; color: #777; }
.vruler li:nth-child(3n+2) { height: 46px; }
.vruler span { display: block; writing-mode: vertical-rl; transform: rotate(180deg); width: 18px; }
.canvas { position: relative; overflow: hidden; background: #fff; }
.drawing { position: absolute; left: 0; top: 0; }
.drawing text { font-weight: 700; text-anchor: middle; }
.slice { fill: #fff; }
.drawing .doc-title { font-size: 45px; font-weight: 500; fill: #1a1a1a; }
.card { position: absolute; left: 770px; width: 148px; height: 89px; display: grid; place-content: center; padding-bottom: 3px; text-align: center; border-radius: 8px; color: #fff; font-weight: 700; line-height: 20px; }
.card-blue { top: 47px; background: #4ea6ca; }
.card-orange { top: 153px; background: #f4a42e; }
.card-purple { top: 264px; background: #646cac; }
.card-red { top: 376px; background: #e75a4d; }
.vscroll { grid-column: 3; grid-row: 1 / 3; border-left: 1px solid #dcdcdc; padding: 126px 2px 0 1px; }
.vthumb { height: 406px; border-radius: 5px; background: #bdbdbd; }
.hscroll { grid-column: 1 / 4; border: solid #dcdcdc; border-width: 1px 0; padding: 1px 0 1px 233px; }
.hthumb { width: 487px; height: 9px; border-radius: 5px; background: #bdbdbd; }
.palette { display: flex; align-items: center; height: 24px; padding-left: 11px; gap: 11px; }
.swatches { flex: 1; display: flex; gap: 1px; }
.swatches i { flex: 1; height: 21px; }

.rail { width: 49px; border-left: 1px solid #ccc; }
.rail-btn { width: 48px; height: 66px; padding-left: 1px; }
.rail-fold { height: 47px; }
.rail-on { height: 51px; margin-bottom: 6px; background: #0080ff; }

.status { display: flex; justify-content: space-between; height: 50px; border-top: 1px solid #dcdcdc; color: #000; }
.pages { display: grid; grid-template-columns: 86px 54px 114px 116px 44px; place-items: center; }
.pages > :nth-child(3) { justify-self: end; padding-right: 3px; }
.page-now { width: 100%; height: 36px; line-height: 36px; border-left: 1px solid #dcdcdc; text-align: center; }
.zoom { display: grid; grid-template-columns: 131px 44px 29px 129px 30px 65px 29px 34px 36px; align-items: center; justify-items: center; padding-right: 37px; }
.zoom .dn { justify-self: start; }
.slider { appearance: none; width: 123px; height: 6px; margin: 0; border-radius: 3px; background: linear-gradient(90deg, #bdbdbd 24%, #e0e0e0 24%); }
.slider::-webkit-slider-thumb { appearance: none; width: 18px; height: 18px; border: 3px solid #bdbdbd; border-radius: 50%; background: #fff; }
```
FILE: app.js
```js
// Ruler marks every ten millimetres and the quick colour palette.
const colours = ("b80718 d9091f c75079 e85561 ea6b70 e85f9e e19ab5 ef8e88 f08d9a ffa079 f0ab94 f5bebb e9d4e9 ffd2e5 ffe0e4 " +
  "10254f 233a72 432f78 054a91 016caa 4163b0 5783c6 0080d0 018fd0 2ea7e3 00b4f0 2fc9fb 8cc0eb 9fd8f0 cfeaf6 " +
  "004236 025a32 00655e 566d2f 007f48 1e963f 00b09b 52bec4 1cccb0 47b97f 00af50 80b90f a2d065 bed741 cce8c8 " +
  "e35223 eb6700 f08200 f39a52 f1a500 ffae00 fcb735 f9c732 ffdb00 ffee00 fdf384 ffd46f e9cd98 ffdcab fce9d0 " +
  "782f6e 833e82 663c94 755298 9a67a0 a05789 cc7baf aa91cf c7a4ca ebc2db " +
  "5a2819 773a31 934c2a aa5423 c1763c b3866c deb584 d6cdc7 c8d3cb " +
  "000000 413738 595757 707170 878787 9d9f9e b2b5b4 cbcdcc dbdbdb ededed ffffff").split(" ");
document.getElementById("swatches").innerHTML =
  colours.map(c => `<i style="background:#${c}"></i>`).join("");

const marks = (from, to) => Array.from({ length: to - from + 1 }, (_, i) => (from + i) * 10);
document.getElementById("hruler").innerHTML = marks(1, 21).map(n => `<li>${n}</li>`).join("");
document.getElementById("vruler").innerHTML = marks(0, 14).map(n => `<li><span>${n}</span></li>`).join("");
```
